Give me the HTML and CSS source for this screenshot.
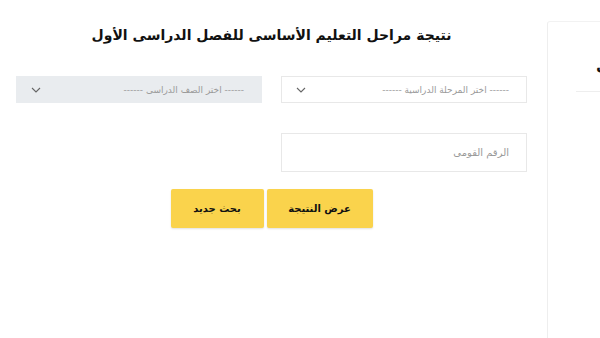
FILE: index.html
```html
<!DOCTYPE html>
<html lang="ar">
<head>
<meta charset="utf-8">
<link rel="stylesheet" href="styles.css">
</head>
<body>
<div class="page">
  <main class="main" dir="rtl">
    <h1 class="title">نتيجة مراحل التعليم الأساسى للفصل الدراسى الأول</h1>
    <div class="form">
      <div class="select">
        <span class="ph">------ اختر المرحلة الدراسية ------</span>
        <svg class="chev" width="10" height="6" viewBox="0 0 10 6"><path d="M1 1l4 4 4-4" fill="none" stroke="#666" stroke-width="1.1"/></svg>
      </div>
      <div class="select disabled">
        <span class="ph">------ اختر الصف الدراسى ------</span>
        <svg class="chev" width="10" height="6" viewBox="0 0 10 6"><path d="M1 1l4 4 4-4" fill="none" stroke="#666" stroke-width="1.1"/></svg>
      </div>
      <div class="input"><span class="ph">الرقم القومى</span></div>
    </div>
    <div class="buttons">
      <button class="btn btn-show">عرض النتيجة</button>
      <button class="btn btn-new">بحث جديد</button>
    </div>
  </main>
  <aside class="side">
    <div class="side-head" dir="rtl">تواصل</div>
    <div class="side-line"></div>
  </aside>
</div>
</body>
</html>
```
FILE: styles.css
```css
html, body {
  margin: 0;
  padding: 0;
  background: #fff;
  overflow: hidden;
  font-family: "DejaVu Sans", sans-serif;
}
.page {
  display: flex;
  width: 600px;
  height: 338px;
  overflow: hidden;
}
.main {
  width: 511px;
  padding: 0 0 0 16px;
  margin-right: 20px;
  flex: none;
}
.title {
  margin: 24px 0 0 0;
  height: 23px;
  font-size: 14px;
  line-height: 23px;
  font-weight: bold;
  text-align: center;
  color: #111;
}
.form {
  display: grid;
  grid-template-columns: 246px 246px;
  column-gap: 19px;
  row-gap: 30px;
  margin-top: 29px;
}
.select {
  height: 27px;
  box-sizing: border-box;
  border: 1px solid #e8e8e8;
  background: #fff;
  display: flex;
  align-items: center;
  justify-content: space-between;
  padding: 0 17px 0 14px;
}
.select.disabled {
  background: #e9ecef;
  border-color: #e9ecef;
}
.ph {
  font-size: 9px;
  color: #9a9a9a;
}
.chev { display: block; }
.input {
  height: 39px;
  box-sizing: border-box;
  border: 1px solid #e8e8e8;
  display: flex;
  align-items: center;
  padding: 0 17px;
}
.input .ph { font-size: 10px; }
.buttons {
  display: flex;
  justify-content: center;
  gap: 3px;
  margin-top: 17px;
}
.btn {
  height: 39px;
  border: none;
  border-radius: 2px;
  background: #fad34c;
  font-family: "DejaVu Sans", sans-serif;
  font-weight: bold;
  font-size: 10px;
  color: #111;
  box-shadow: 0 1px 2px rgba(0,0,0,0.12);
  padding: 0;
}
.btn-show { width: 106px; }
.btn-new { width: 93px; }
.side {
  flex: none;
  width: 200px;
  margin-top: 21px;
  border-left: 1px solid #eeeeee;
  border-top: 1px solid #f2f2f2;
  border-top-left-radius: 3px;
}
.side-head {
  text-align: left;
  padding-left: 48px;
  margin-top: 33px;
  font-size: 15px;
  font-weight: bold;
  line-height: 20px;
  color: #111;
}
.side-line {
  margin: 16px 0 0 28px;
  border-bottom: 1px solid #eeeeee;
}
```
